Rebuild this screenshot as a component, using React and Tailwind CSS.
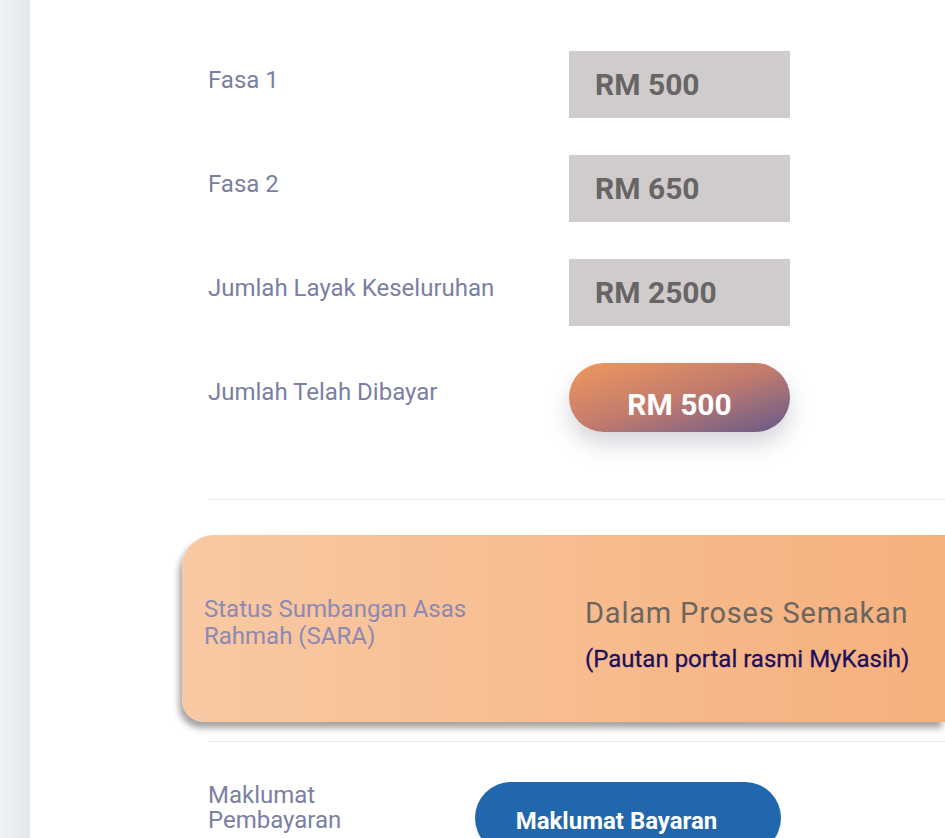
import React from 'react';

const rows = [
  { label: 'Fasa 1', value: 'RM 500' },
  { label: 'Fasa 2', value: 'RM 650' },
  { label: 'Jumlah Layak Keseluruhan', value: 'RM 2500' },
];

export default function App() {
  return (
    <div className="flex h-[838px] w-[945px] overflow-hidden bg-white font-['Roboto',sans-serif]">
      {/* side strip */}
      <div className="w-[30px] shrink-0 bg-gradient-to-r from-[#f0f3f6] to-[#e2e7eb]" />

      <div className="flex-1 pl-[178px] pt-[51px]">
        <div className="flex flex-col gap-[37px]">
          {rows.map((r) => (
            <div key={r.label} className="flex items-start">
              <div className="w-[361px] pt-[15px] text-[24px] leading-[28px] text-[#7a80a4]">{r.label}</div>
              <div className="flex h-[67px] w-[221px] items-center bg-[#cfcccb] pl-[26px] text-[30px] font-bold text-[#676565]">
                {r.value}
              </div>
            </div>
          ))}
          <div className="flex items-start">
            <div className="w-[361px] pt-[15px] text-[24px] leading-[28px] text-[#7a80a4]">Jumlah Telah Dibayar</div>
            <div className="flex h-[69px] w-[221px] items-center justify-center rounded-full bg-gradient-to-br from-[#f0985c] via-[#c27b6c] to-[#665888] pt-[14px] text-[30px] font-bold text-white shadow-[0_12px_22px_rgba(120,120,140,0.3)]">
              RM 500
            </div>
          </div>
        </div>

        <div className="mt-[67px] h-px bg-[#ececec]" />

        {/* SARA card */}
        <div className="-ml-[26px] mt-[35px] flex h-[187px] items-start rounded-tl-[32px] rounded-bl-[22px] bg-gradient-to-r from-[#f8c9a3] to-[#f6b07c] pl-[22px] pt-[61px] shadow-[-3px_6px_6px_rgba(60,50,50,0.45)]">
          <div className="w-[381px] pr-[90px] text-[24px] leading-[27px] text-[#8e89b4]">
            Status Sumbangan Asas Rahmah (SARA)
          </div>
          <div className="flex flex-col">
            <div className="text-[29px] leading-[34px] tracking-[0.8px] text-[#6c6660]">Dalam Proses Semakan</div>
            <div className="mt-[16px] text-[24px] leading-[26px] text-[#1d0f5e] [-webkit-text-stroke:0.3px_#1d0f5e]">(Pautan portal rasmi MyKasih)</div>
          </div>
        </div>

        <div className="mt-[19px] h-px bg-[#ececec]" />

        <div className="mt-[40px] flex items-start">
          <div className="w-[267px] pt-[1px] pr-[100px] text-[24px] leading-[25px] text-[#7a80a4]">
            Maklumat Pembayaran
          </div>
          <div className="flex h-[72px] w-[306px] items-center justify-center rounded-full bg-[#2067ad] pt-[6px] pr-[23px] text-[24px] font-bold text-white">
            Maklumat Bayaran
          </div>
        </div>
      </div>
    </div>
  );
}
